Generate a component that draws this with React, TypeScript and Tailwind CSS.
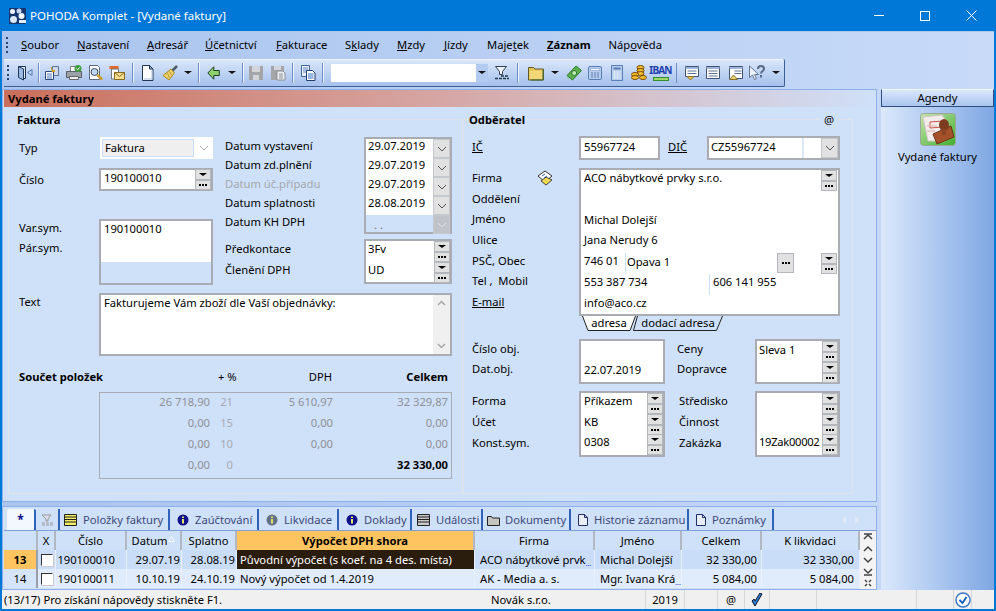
import type { ReactNode } from "react";

const menu = ["Soubor", "Nastavení", "Adresář", "Účetnictví", "Fakturace", "Sklady", "Mzdy", "Jízdy", "Majetek"];
const menuKeys = [0, 0, 0, 0, 0, 1, 0, 0, 4];
const menuWidths = ["w-[56px]", "w-[70px]", "w-[58px]", "w-[71px]", "w-[69px]", "w-[52px]", "w-[47px]", "w-[43px]", "w-[60px]"];

function Grip() {
  return (
    <div className="flex h-[16px] w-[3px] flex-col justify-between">
      {[0, 1, 2, 3].map((i) => (
        <div key={i} className="h-[2px] w-[2px] bg-[#27456f]" />
      ))}
    </div>
  );
}

function Ic({ children, w = 16 }: { children: ReactNode; w?: number }) {
  return (
    <svg width={w} height="16" viewBox={`0 0 ${w} 16`} className="block">
      {children}
    </svg>
  );
}

const icons: Record<string, ReactNode> = {
  door: (
    <Ic>
      <path d="M1.500 1.500h7v12h-2" fill="#dce8f8" stroke="#1d3557" />
      <path d="M1.500 1.500l5 2.500v11l-5-2.500z" fill="#9dbbe2" stroke="#1d3557" />
      <path d="M15 4.500v6L10.500 7.500z" fill="#c7dcf7" stroke="#4d76ad" />
    </Ic>
  ),
  copy: (
    <Ic>
      <path d="M8.500 1.500h6v9h-6z" fill="#cfd9ea" stroke="#5e7497" />
      <path d="M1.500 6.500h8v8h-8z" fill="#fff" stroke="#2d4a78" />
      <path d="M3 9h5M3 11h5M3 13h5" stroke="#4f7ac0" />
      <path d="M7 2l1 3 3 1-3 1" fill="#f0c430" stroke="#c59a15" />
    </Ic>
  ),
  print: (
    <Ic>
      <path d="M4.500 1.500h6v5h-6z" fill="#fff" stroke="#777" />
      <path d="M.5 6.500h15v6H.5z" fill="#9ca0a8" stroke="#5a5d63" />
      <path d="M3.500 11.500h9v3h-9z" fill="#eceef2" stroke="#666" />
      <circle cx="12" cy="3.500" r="3.500" fill="#3f9e3f" />
      <path d="M10.300 3.500l1.300 1.300 2.200-2.500" stroke="#fff" fill="none" />
    </Ic>
  ),
  preview: (
    <Ic>
      <path d="M1.500 .5h8l2 2v12h-10z" fill="#fff" stroke="#5a6a84" />
      <circle cx="6.500" cy="7" r="3.500" fill="#bcd8f3" stroke="#3c4a60" />
      <path d="M9.500 10l4.500 4.500" stroke="#c99c28" strokeWidth="2.500" />
    </Ic>
  ),
  mail: (
    <Ic>
      <path d="M.5 1h9v3h-9z" fill="#e2692e" />
      <path d="M2.500 4h7v10h-7z" fill="#fff" stroke="#777" />
      <path d="M5.500 7.500h10v7h-10z" fill="#f7dd90" stroke="#8a6a20" />
      <path d="M5.500 7.500l5 4 5-4" fill="none" stroke="#8a6a20" />
    </Ic>
  ),
  doc: (
    <Ic w={13}>
      <path d="M1.500 .5h7l3.500 3.500v11.500H1.500z" fill="#fff" stroke="#1f3450" />
      <path d="M8.500 .5v3.500H12z" fill="#9fb8dc" stroke="#1f3450" />
      <path d="M11 5v9H3" fill="none" stroke="#a9c0e2" />
    </Ic>
  ),
  broom: (
    <Ic>
      <path d="M15 1l-5 5" stroke="#4e5a68" strokeWidth="2.500" />
      <path d="M9 4l3.500 4L7 15 1 10.500z" fill="#eed06a" stroke="#a88a2c" />
      <path d="M5 8l3 5M7.500 6.500l2.500 4" stroke="#b99a35" />
    </Ic>
  ),
  back: (
    <Ic w={13}>
      <path d="M.8 8l6-6.200v3.700h5.500v5H6.800v3.700z" fill="#8fd06c" stroke="#1b3f20" />
    </Ic>
  ),
  save: (
    <Ic>
      <path d="M1 1h14v14H1z" fill="#a3a5a9" />
      <path d="M4 1h8v6H4z" fill="#d2d5da" />
      <path d="M5 10h6v5H5z" fill="#d2d5da" />
    </Ic>
  ),
  saveall: (
    <Ic>
      <path d="M1 1h13v14H1z" fill="#a3a5a9" />
      <path d="M4 1h7v4H4z" fill="#d2d5da" />
      <path d="M7 6h6l2 2v7H7z" fill="#eef2f8" stroke="#8a8c90" />
      <path d="M9 9h4M9 11h4M9 13h4" stroke="#8a8c90" />
    </Ic>
  ),
  paste: (
    <Ic>
      <path d="M1.500 .5h8v11h-8z" fill="#e6eefb" stroke="#44679c" />
      <path d="M3 3h5M3 5h5M3 7h5" stroke="#6a8cc0" />
      <path d="M6.500 5.500h6l2.500 2.500v7.500H6.500z" fill="#fff" stroke="#1f3f70" />
      <path d="M8 9h5.500M8 11h5.500M8 13h5.500" stroke="#2f6fc8" />
    </Ic>
  ),
  folder: (
    <Ic>
      <path d="M.5 2.500h5l1.500 1.500h8.500v11H.5z" fill="#e6c050" stroke="#5f5a2a" />
      <path d="M1.500 5.500h13v8.500h-13z" fill="#f2d778" />
      <path d="M15 5v10H3" fill="none" stroke="#3e6a3a" />
    </Ic>
  ),
  money: (
    <Ic>
      <path d="M1 10.500L10 1l5.500 4.500L6.500 15z" fill="#5bb04c" stroke="#2d7a2a" />
      <path d="M1 12.500L3 14" stroke="#8fd07f" />
      <circle cx="8.200" cy="8" r="2.500" fill="#bfe6b0" stroke="#2d7a2a" />
    </Ic>
  ),
  calc: (
    <Ic w={14}>
      <rect x=".5" y="1.500" width="13" height="13" rx="1.500" fill="#b7cdee" stroke="#5a7db3" />
      <path d="M2.500 3.500h9v2h-9z" fill="#edf3fc" stroke="#7a97c4" strokeWidth=".5" />
      <path d="M3 8h8M3 10h8M3 12h8" stroke="#5a7db3" strokeDasharray="2 1" />
    </Ic>
  ),
  calc2: (
    <Ic w={12}>
      <path d="M.5 .5h11v15H.5z" fill="#b7cdee" stroke="#5a7db3" />
      <path d="M2.500 2.500h7v2h-7z" fill="#5a7db3" />
      <path d="M2.500 7h7M2.500 9h7M2.500 11h7M2.500 13h7" stroke="#fff" strokeDasharray="2 1" />
    </Ic>
  ),
  coins: (
    <Ic>
      <ellipse cx="9.500" cy="2.500" rx="3.500" ry="2" fill="#f0bc30" stroke="#7d4d08" />
      <ellipse cx="9.500" cy="5.500" rx="3.500" ry="2" fill="#f0bc30" stroke="#7d4d08" />
      <ellipse cx="9.500" cy="8.500" rx="3.500" ry="2" fill="#f0bc30" stroke="#7d4d08" />
      <ellipse cx="4" cy="9.500" rx="3.500" ry="2" fill="#f0bc30" stroke="#7d4d08" />
      <ellipse cx="4" cy="12.500" rx="3.500" ry="2" fill="#f0bc30" stroke="#7d4d08" />
      <ellipse cx="12" cy="12.500" rx="3.500" ry="2" fill="#f0bc30" stroke="#7d4d08" />
    </Ic>
  ),
  note1: (
    <Ic>
      <path d="M1.500 1.500h13v10h-13z" fill="#fff" stroke="#3f5273" />
      <path d="M1.500 3h13" stroke="#9db6dc" strokeWidth="2" />
      <path d="M3.500 6h9M3.500 8.500h9" stroke="#5d7298" />
      <path d="M3 11.500h7L6.500 15z" fill="#e9c64a" stroke="#8a7130" />
    </Ic>
  ),
  note2: (
    <Ic w={15}>
      <path d="M.5 1.500h13v12H.5z" fill="#fff" stroke="#3f5273" />
      <path d="M.5 3h13" stroke="#9db6dc" strokeWidth="2" />
      <path d="M2.500 6h9M2.500 8.500h9M2.500 11h9" stroke="#5d7298" />
    </Ic>
  ),
  note3: (
    <Ic>
      <path d="M1.500 1.500h13v12h-13z" fill="#fff" stroke="#3f5273" />
      <path d="M1.500 3h13" stroke="#9db6dc" strokeWidth="2" />
      <path d="M6.500 6h7M6.500 8.500h7" stroke="#5d7298" />
      <path d="M1.500 14.500h8L5.500 10z" fill="#e9d570" stroke="#8a7130" />
    </Ic>
  ),
  help: (
    <Ic>
      <path d="M.5 1v11.500l3-2.500 2 4.500 2-1-2-4h4z" fill="#eef3fb" stroke="#64748e" />
      <path d="M9 4c0-4 6-4 6 0 0 2-3 2-3 4.500M12 10v2.500" stroke="#586a88" strokeWidth="2" fill="none" />
    </Ic>
  ),
};

function Tool({ name }: { name: string }) {
  return <div className="flex w-[22px] justify-center">{icons[name]}</div>;
}

function Caret() {
  return (
    <div className="flex w-[16px] justify-center">
      <div className="h-0 w-0 border-x-[4px] border-t-[3px] border-x-transparent border-t-[#111]" />
    </div>
  );
}

function Sep({ className = "" }: { className?: string }) {
  return <div className={`h-[20px] w-[2px] border-l border-[#6f8fc4] bg-white/70 ${className}`} />;
}

function Toolbar() {
  return (
    <div className="flex h-[28px] w-[781px] items-center rounded-r-[2px] border-b border-r border-[#3d5f96] bg-gradient-to-b from-[#dce8fb] to-[#a5c0ec] pl-[3px] shadow-[inset_0_1px_0_#eef4fe]">
      <Grip />
      <div className="w-[4px]" />
      <Tool name="door" />
      <Sep className="mx-[2px]" />
      <Tool name="copy" />
      <Tool name="print" />
      <Tool name="preview" />
      <Tool name="mail" />
      <Sep className="ml-[4px] mr-[3px]" />
      <Tool name="doc" />
      <Tool name="broom" />
      <Caret />
      <Sep className="mx-[2px]" />
      <Tool name="back" />
      <Caret />
      <Sep className="mx-[2px]" />
      <Tool name="save" />
      <Tool name="saveall" />
      <Sep className="mx-[3px]" />
      <Tool name="paste" />
      <Sep className="mx-[3px]" />
      <div className="ml-[4px] flex h-[18px] w-[160px] justify-end bg-white">
        <div className="flex w-[12px] items-center justify-center bg-[#b3cbf0]">
          <div className="h-0 w-0 border-x-[4px] border-t-[3px] border-x-transparent border-t-[#111]" />
        </div>
      </div>
      <div className="flex w-[29px] justify-center">
        <Ic>
          <path d="M1.500 1.500h11L8.500 6.500v3h-3v-3z" fill="#f2f6fc" stroke="#2c3e50" />
          <path d="M7 11h8M1 13.500h14" stroke="#1f3a4a" strokeDasharray="3 1" strokeWidth="1.500" />
        </Ic>
      </div>
      <Sep />
      <div className="w-[7px]" />
      <Tool name="folder" />
      <Caret />
      <Tool name="money" />
      <Tool name="calc" />
      <Tool name="calc2" />
      <Tool name="coins" />
      <div className="flex h-[16px] w-[22px] flex-col items-center text-[10px] font-bold leading-[11px] tracking-[-0.8px] text-[#1d3fae]">
        IBAN
        <div className="mt-[1px] h-[4px] w-[16px] border border-[#2f8c2f] bg-[#9fd86b]" />
      </div>
      <Sep className="mx-[4px]" />
      <Tool name="note1" />
      <Tool name="note2" />
      <Tool name="note3" />
      <Tool name="help" />
      <Caret />
    </div>
  );
}

function Drop({ h = "h-[11px]" }: { h?: string }) {
  return (
    <div className={`flex ${h} w-[16px] items-center justify-center border border-[#b4b7bb] bg-[#e1e1e1]`}>
      <div className="h-0 w-0 border-x-[4px] border-t-[3px] border-x-transparent border-t-black" />
    </div>
  );
}

function Dots({ h = "h-[10px]" }: { h?: string }) {
  return (
    <div className={`flex ${h} w-[16px] items-center justify-center gap-[1px] border border-[#b4b7bb] bg-[#e1e1e1]`}>
      <div className="h-[2px] w-[2px] bg-black" />
      <div className="h-[2px] w-[2px] bg-black" />
      <div className="h-[2px] w-[2px] bg-black" />
    </div>
  );
}

function Pick() {
  return (
    <div className="ml-auto flex shrink-0 flex-col">
      <Drop />
      <Dots />
    </div>
  );
}

function Chevron({ disabled = false }: { disabled?: boolean }) {
  return (
    <div className={`flex h-[19px] w-[17px] items-center justify-center border border-[#c5c8cc] ${disabled ? "bg-[#c0c4ca]" : "bg-[#e1e1e1]"}`}>
      <svg width="10" height="6" viewBox="0 0 10 6">
        <path d="M1 1l4 4 4-4" fill="none" stroke={disabled ? "#dfe2e6" : "#555"} />
      </svg>
    </div>
  );
}

const box = "border-2 border-[#a9adb3]";

function Row({ label, dim = false, className = "h-[19px]" }: { label: ReactNode; dim?: boolean; className?: string }) {
  return <div className={`flex items-center ${className} ${dim ? "text-[#a5a8ad]" : ""}`}>{label}</div>;
}

function Fakturace() {
  const dates = [
    ["Datum vystavení", "29.07.2019"],
    ["Datum zd.plnění", "29.07.2019"],
    ["Datum úč.případu", "29.07.2019"],
    ["Datum splatnosti", "28.08.2019"],
  ];
  const totals = [
    ["26 718,90", "21", "5 610,97", "32 329,87"],
    ["0,00", "15", "0,00", "0,00"],
    ["0,00", "10", "0,00", "0,00"],
    ["0,00", "0", "", ""],
  ];
  return (
    <div className="ml-[4px] h-[375px] w-[454px] border border-[#dfe4ea] pl-[10px] pr-[8px]">
      <div className="-ml-[2px] -mt-[8px] h-[16px] w-fit bg-[#cfe0f9] pr-[4px] font-bold leading-[16px]">Faktura</div>
      <div className="mt-[9px] flex">
        <div className="w-[194px]">
          <div className="flex h-[22px] items-center">
            <div className="w-[81px]">Typ</div>
            <div className="flex h-[22px] w-[113px] items-center border-2 border-white bg-white">
              <div className="flex h-full w-[92px] items-center border border-[#cddcf5] bg-[#efefef] pl-[2px]">Faktura</div>
              <svg width="10" height="6" viewBox="0 0 10 6" className="ml-[5px]">
                <path d="M1 1l4 4 4-4" fill="none" stroke="#aaa" />
              </svg>
            </div>
          </div>
          <div className="mt-[9px] flex h-[23px] items-center">
            <div className="w-[80px]">Číslo</div>
            <div className={`flex h-[23px] w-[114px] items-center justify-between bg-white pl-[3px] ${box}`}>
              <span className="pb-[3px]">190100010</span>
              <Pick />
            </div>
          </div>
          <div className="mt-[28px] flex h-[66px]">
            <div className="-mt-[1px] w-[80px]">
              <Row label="Var.sym." className="h-[20px]" />
              <Row label="Pár.sym." className="h-[20px]" />
            </div>
            <div className={`w-[114px] ${box}`}>
              <div className="h-[41px] bg-white pl-[3px] leading-[16px]">190100010</div>
            </div>
          </div>
        </div>
        <div className="ml-[12px] w-[227px]">
          <div className="flex h-[97px]">
            <div className="-mt-[1px] w-[139px]">
              {dates.map(([l], i) => (
                <Row key={l} label={l} dim={i === 2} />
              ))}
              <Row label="Datum KH DPH" />
            </div>
            <div className={`flex-1 ${box}`}>
              {dates.map(([l, d]) => (
                <div key={l} className="flex">
                  <div className="flex h-[19px] flex-1 items-center bg-white pb-[5px] pl-[2px]">{d}</div>
                  <Chevron />
                </div>
              ))}
              <div className="flex">
                <div className="flex h-[19px] flex-1 items-center pl-[8px] text-[#777]">. .</div>
                <Chevron disabled />
              </div>
            </div>
          </div>
          <div className="mt-[5px] flex h-[45px]">
            <div className="-mt-[1px] w-[139px]">
              <Row label="Předkontace" className="h-[21px]" />
              <Row label="Členění DPH" className="h-[21px]" />
            </div>
            <div className={`flex-1 bg-white ${box}`}>
              {["3Fv", "UD"].map((v) => (
                <div key={v} className="flex h-[20.500px] items-start pl-[2px]">
                  <span className="pt-[2px]">{v}</span>
                  <Pick />
                </div>
              ))}
            </div>
          </div>
        </div>
      </div>
      <div className="mt-[8px] flex h-[63px]">
        <div className="w-[80px] pt-[3px]">Text</div>
        <div className={`flex w-[353px] justify-between bg-white ${box}`}>
          <div className="pl-[3px] leading-[16px]">Fakturujeme Vám zboží dle Vaší objednávky:</div>
          <div className="flex w-[17px] flex-col items-center justify-between bg-[#f0f0f0] py-[5px]">
            <svg width="9" height="6" viewBox="0 0 9 6">
              <path d="M1 5l3.500-3.500L8 5" fill="none" stroke="#a8a8a8" strokeWidth="1.500" />
            </svg>
            <svg width="9" height="6" viewBox="0 0 9 6">
              <path d="M1 1l3.500 3.500L8 1" fill="none" stroke="#a8a8a8" strokeWidth="1.500" />
            </svg>
          </div>
        </div>
      </div>
      <div className="mt-[13px] flex h-[16px] items-center">
        <div className="w-[199px] font-bold">Součet položek</div>
        <div className="w-[18px] whitespace-nowrap text-right">+ %</div>
        <div className="w-[96px] text-right">DPH</div>
        <div className="w-[116px] text-right font-bold">Celkem</div>
      </div>
      <div className="ml-[80px] mt-[7px] h-[87px] w-[353px] border border-[#a9adb3] text-[#8e9196]">
        {totals.map(([a, p, d, c]) => (
          <div key={p} className="flex h-[21px] items-center pb-[4px]">
            <div className="w-[110px] text-right">{a}</div>
            <div className="w-[23px] text-right text-[#a6abb2]">{p}</div>
            <div className="w-[100px] text-right">{d}</div>
            <div className={`w-[115px] text-right ${p === "0" ? "font-bold text-black" : ""}`}>{p === "0" ? "32 330,00" : c}</div>
          </div>
        ))}
      </div>
    </div>
  );
}

function Tabs() {
  return (
    <div className="flex h-[15px]">
      <div className="relative flex w-[54px] items-center justify-center">
        <svg className="absolute inset-0" width="54" height="15" viewBox="0 0 54 15">
          <path d="M.5 0l5.500 14.500h42L53.500 0" fill="#fff" stroke="#222" />
        </svg>
        <span className="relative pb-[2px]">adresa</span>
      </div>
      <div className="relative -ml-[3px] flex w-[90px] items-center justify-center">
        <svg className="absolute inset-0" width="90" height="15" viewBox="0 0 90 15">
          <path d="M4.500 0L.5 14.500h83L89.500 0" fill="none" stroke="#222" />
        </svg>
        <span className="relative pb-[2px]">dodací adresa</span>
      </div>
    </div>
  );
}

function Odberatel() {
  const addr = ["ACO nábytkové prvky s.r.o.", "", "Michal Dolejší", "Jana Nerudy 6"];
  return (
    <div className="ml-[1px] h-[375px] w-[390px] border border-[#dfe4ea] pl-[8px]">
      <div className="-ml-[3px] -mt-[8px] flex h-[16px] justify-between pr-[14px] leading-[16px]">
        <div className="bg-[#cfe0f9] pr-[2px] font-bold">Odběratel</div>
        <div className="bg-[#cfe0f9] px-[4px]">@</div>
      </div>
      <div className="mt-[8px] flex h-[24px] items-center">
        <div className="w-[107px] pb-[3px] underline">IČ</div>
        <div className={`flex h-[24px] w-[81px] items-center bg-white pb-[3px] pl-[3px] ${box}`}>55967724</div>
        <div className="ml-[8px] w-[39px] pb-[3px] underline">DIČ</div>
        <div className={`flex h-[24px] w-[133px] items-center bg-white ${box}`}>
          <div className="flex h-full w-[95px] items-center border-r-2 border-[#dbe7fb] pb-[3px] pl-[2px]">CZ55967724</div>
          <div className="flex-1" />
          <div className="flex h-full w-[17px] items-center justify-center border border-[#c5c8cc] bg-[#e1e1e1]">
            <svg width="10" height="6" viewBox="0 0 10 6">
              <path d="M1 1l4 4 4-4" fill="none" stroke="#555" />
            </svg>
          </div>
        </div>
      </div>
      <div className="mt-[8px] flex h-[148px]">
        <div className="-mt-[1px] w-[107px]">
          <div className="flex h-[21px] items-center gap-[35px]">
            Firma
            <svg width="16" height="16" viewBox="0 0 16 16">
              <path d="M1 6l7-5 7 5-7 6z" fill="#fff" stroke="#333" />
              <path d="M5 6l3-2M7 8l3-2" stroke="#2f5fc8" />
              <path d="M4 11l5-4 6 3-6 5z" fill="#ecd94e" stroke="#444" />
            </svg>
          </div>
          {["Oddělení", "Jméno", "Ulice", "PSČ, Obec", "Tel ,  Mobil"].map((l) => (
            <div key={l} className="flex h-[20.700px] items-center whitespace-pre">{l}</div>
          ))}
          <div className="flex h-[20.700px] items-center underline">E-mail</div>
        </div>
        <div className="w-[261px] border-2 border-[#a9adb3] bg-white">
          {addr.map((a, i) => (
            <div key={i} className="flex h-[20.800px] items-start pl-[3px] pr-[1px]">
              <span className="pt-[2px]">{a}</span>
              {i === 0 && <Pick />}
            </div>
          ))}
          <div className="flex h-[20.800px] items-start pr-[1px]">
            <div className="w-[44px] pl-[3px] pt-[2px]">746 01</div>
            <div className="h-full w-[152px] border-l border-[#cfe0f9] pl-[1px] pt-[3px]">Opava 1</div>
            <div className="flex h-[20px] w-[17px] items-center justify-center gap-[1px] border border-[#b4b7bb] bg-[#e1e1e1]">
              <div className="h-[2px] w-[2px] bg-black" />
              <div className="h-[2px] w-[2px] bg-black" />
              <div className="h-[2px] w-[2px] bg-black" />
            </div>
            <Pick />
          </div>
          <div className="flex h-[20.800px] items-start">
            <div className="w-[128px] pl-[3px] pt-[2px]">553 387 734</div>
            <div className="h-full border-l border-[#cfe0f9] pl-[3px] pt-[2px]">606 141 955</div>
          </div>
          <div className="h-[20.800px] pl-[3px] pt-[2px]">info@aco.cz</div>
        </div>
      </div>
      <div className="ml-[110px]">
        <Tabs />
      </div>
      <div className="mt-[8px] flex h-[45px]">
        <div className="-mt-[1px] w-[107px]">
          <Row label="Číslo obj." className="h-[21px]" />
          <Row label="Dat.obj." className="h-[20px]" />
        </div>
        <div className={`w-[86px] bg-white pl-[3px] ${box}`}>
          <div className="h-[19px]" />
          <Row label="22.07.2019" className="h-[20px]" />
        </div>
        <div className="-mt-[1px] ml-[12px] w-[78px]">
          <Row label="Ceny" className="h-[21px]" />
          <Row label="Dopravce" className="h-[20px]" />
        </div>
        <div className={`flex w-[85px] justify-between bg-white pl-[2px] ${box}`}>
          <div className="pt-[1px] leading-[16px]">Sleva 1</div>
          <div className="flex flex-col">
            <Pick />
            <Pick />
          </div>
        </div>
      </div>
      <div className="mt-[7px] flex h-[66px]">
        <div className="-mt-[1px] w-[107px]">
          <Row label="Forma" className="h-[21px]" />
          <Row label="Účet" className="h-[21px]" />
          <Row label="Konst.sym." className="h-[21px]" />
        </div>
        <div className={`w-[86px] bg-white ${box}`}>
          {["Příkazem", "KB", "0308"].map((v) => (
            <div key={v} className="flex h-[20.600px] items-start pl-[3px]">
              <span className="pt-[2px]">{v}</span>
              <Pick />
            </div>
          ))}
        </div>
        <div className="-mt-[1px] ml-[14px] w-[76px]">
          <Row label="Středisko" className="h-[21px]" />
          <Row label="Činnost" className="h-[21px]" />
          <Row label="Zakázka" className="h-[21px]" />
        </div>
        <div className={`w-[85px] bg-white ${box}`}>
          {["", "", "19Zak00002"].map((v, i) => (
            <div key={i} className="flex h-[20.600px] items-start pl-[2px]">
              <span className="whitespace-nowrap pt-[2px] tracking-[-0.3px]">{v}</span>
              <Pick />
            </div>
          ))}
        </div>
      </div>
    </div>
  );
}

function BlueI({ color = "#10108a" }: { color?: string }) {
  return (
    <svg width="12" height="12" viewBox="0 0 12 12">
      <circle cx="6" cy="6" r="5.500" fill={color} />
      <path d="M5 5h2v4.500H5zM5 2.500h2v1.500H5z" fill="#e9e26a" />
    </svg>
  );
}

function Sheet({ fill = "#f0f0a0" }: { fill?: string }) {
  return (
    <svg width="13" height="12" viewBox="0 0 13 12" className="-ml-[2px]">
      <path d="M.5.5h12v11H.5z" fill={fill} stroke="#222" />
      <path d="M1 3h11M1 5.500h11M1 8h11" stroke="#222" />
    </svg>
  );
}

function DocIc() {
  return (
    <svg width="10" height="12" viewBox="0 0 10 12">
      <path d="M.5.500h6l3 3v8h-9z" fill="#e8ecf5" stroke="#222f66" />
      <path d="M6.500.5v3h3" fill="none" stroke="#222f66" />
    </svg>
  );
}

const tabs: { w: string; label: string; icon: ReactNode }[] = [
  { w: "w-[109px]", label: "Položky faktury", icon: <Sheet fill="#f2ec66" /> },
  { w: "w-[87px]", label: "Zaúčtování", icon: <BlueI /> },
  { w: "w-[78px]", label: "Likvidace", icon: <BlueI color="#667087" /> },
  { w: "w-[71px]", label: "Doklady", icon: <BlueI /> },
  { w: "w-[69px]", label: "Události", icon: <Sheet fill="#c9c9c9" /> },
  {
    w: "w-[86px]",
    label: "Dokumenty",
    icon: (
      <svg width="13" height="12" viewBox="0 0 13 12" className="-ml-[3px] -mr-[1px]">
        <path d="M.5 2.500h4l1 1.500h7v7.500H.5z" fill="#c6c4be" stroke="#222" />
      </svg>
    ),
  },
  { w: "w-[116px]", label: "Historie záznamu", icon: <DocIc /> },
  { w: "w-[83px]", label: "Poznámky", icon: <DocIc /> },
];

const cols = ["w-[34px]", "w-[18px]", "w-[71px]", "w-[55px]", "w-[55px]", "w-[238px]", "w-[120px]", "w-[87px]", "w-[80px]", "w-[98px]"];

function Cell({ w, children, className = "" }: { w: string; children?: ReactNode; className?: string }) {
  return <div className={`flex h-full shrink-0 items-center overflow-hidden whitespace-nowrap border-r border-[#eaf1fc] ${w} ${className}`}>{children}</div>;
}

function Check() {
  return <div className="h-[12px] w-[12px] border border-[#333] border-b-white border-r-white bg-white shadow-[1px_1px_0_#ccc]" />;
}

function Agenda() {
  const rows = [
    { n: "13", bg: "bg-[#c9dcf8]", head: "bg-[#fdc45f] font-bold", c: "190100010", d: "29.07.19", s: "28.08.19", v: "Původní výpočet (s koef. na 4 des. místa)", f: "ACO nábytkové prvk", j: "Michal Dolejší", a: "32 330,00" },
    { n: "14", bg: "bg-[#e0ebfc]", head: "bg-[#d6e4fa]", c: "190100011", d: "10.10.19", s: "24.10.19", v: "Nový výpočet od 1.4.2019", f: "AK - Media a. s.", j: "Mgr. Ivana Krá", a: "5 084,00" },
  ];
  return (
    <div className="mt-[4px] flex h-[84px] flex-col border border-[#8eb0e8] bg-[#cfe0f9] pl-[1px]">
      <div className="flex h-[23px] pl-[3px] pt-[2px]">
        <div className="mr-[1px] flex w-[29px] items-center justify-center rounded-t-[2px] border-r-2 border-[#2f62b8] bg-[#f3f7fe] text-[12px] font-bold text-[#10108a]">*</div>
        <div className="mr-[1px] flex w-[23px] items-center justify-center border-r-2 border-[#2f62b8]">
          <svg width="13" height="12" viewBox="0 0 13 12">
            <path d="M1 1h9L7 5v2H5V5z" fill="#dde" stroke="#999" />
            <path d="M1 9h11M1 11h11" stroke="#999" strokeDasharray="3 1" />
          </svg>
        </div>
        {tabs.map((t) => (
          <div key={t.label} className={`mr-[2px] flex shrink-0 items-center gap-[6px] overflow-hidden whitespace-nowrap border-r-2 border-[#2f62b8] pl-[5px] text-[#3e4a78] ${t.w}`}>
            {t.icon}
            {t.label}
          </div>
        ))}
        <div className="ml-[66px] flex items-center gap-[9px]">
          <div className="h-0 w-0 border-y-[4px] border-r-[4px] border-y-transparent border-r-[#dfe8f7]" />
          <div className="h-0 w-0 border-y-[4px] border-l-[4px] border-y-transparent border-l-[#dfe8f7]" />
        </div>
      </div>
      <div className="flex min-h-0 flex-1">
        <div className="flex w-[856px] flex-col">
          <div className="flex h-[20px] items-center border-t border-[#7f9fd8] bg-[#cfe0f9] text-center">
            {["", "X", "Číslo", "Datum", "Splatno", "Výpočet DPH shora", "Firma", "Jméno", "Celkem", "K likvidaci"].map((h, i) => (
              <Cell key={i} w={cols[i]} className={`justify-center border-r-2 border-r-[#b2b8c2] ${i === 5 ? "bg-[#fdc45f] font-bold" : ""}`}>
                {h}
                {i === 3 && (
                  <svg width="7" height="6" viewBox="0 0 7 6" className="mb-[3px] ml-[1px]">
                    <path d="M.5 5.500h6L3.500 .5z" fill="none" stroke="#f4f8ff" />
                  </svg>
                )}
              </Cell>
            ))}
          </div>
          {rows.map((r) => (
            <div key={r.n} className={`flex h-[19px] items-center ${r.bg}`}>
              <Cell w={cols[0]} className={`justify-center border-r-2 border-r-[#9aa0a9] ${r.head}`}>{r.n}</Cell>
              <Cell w={cols[1]} className="justify-center">
                <Check />
              </Cell>
              <Cell w={cols[2]} className="justify-end pr-[11px]">{r.c}</Cell>
              <Cell w={cols[3]} className="justify-end pr-[1px]">{r.d}</Cell>
              <Cell w={cols[4]} className="justify-end pr-[1px]">{r.s}</Cell>
              <Cell w={cols[5]} className={`pl-[3px] ${r.n === "13" ? "bg-[#2b1d0e] text-white" : ""}`}>{r.v}</Cell>
              <Cell w={cols[6]} className="pl-[5px]">
                {r.f}
                {r.n === "13" && <span className="self-end pb-[2px] text-[7px] leading-none text-[#2536c9]">...</span>}
              </Cell>
              <Cell w={cols[7]} className="pl-[5px]">
                {r.j}
                {r.n === "14" && <span className="self-end pb-[2px] text-[7px] leading-none text-[#2536c9]">...</span>}
              </Cell>
              <Cell w={cols[8]} className="justify-end pr-[4px]">{r.a}</Cell>
              <Cell w={cols[9]} className="justify-end pr-[5px]">{r.a}</Cell>
            </div>
          ))}
        </div>
        <div className="flex w-[17px] flex-col items-center justify-between border-t border-[#7f9fd8] bg-[#f3f3f3] py-[2px]">
          {["M1 1h8M1 6l4-4 4 4", "M1 6l4-4 4 4", "M1 2l4 4 4-4", "M1 1l4 4 4-4M1 7h8", "M2 1l2 2M8 1L6 3M2 7l2-2M8 7L6 5"].map((d) => (
            <svg key={d} width="10" height="8" viewBox="0 0 10 8">
              <path d={d} fill="none" stroke="#444" strokeWidth="1.500" />
            </svg>
          ))}
        </div>
      </div>
    </div>
  );
}

function StatusBar() {
  const cell = "flex h-full items-center border-r border-[#d6d6d6]";
  return (
    <div className="flex h-[19px] items-center bg-[#f0f0f0] pl-[2px]">
      <div className={`w-[642px] ${cell}`}>
        <div className="w-[487px]">(13/17) Pro získání nápovědy stiskněte F1.</div>
        Novák s.r.o.
      </div>
      <div className={`w-[39px] justify-center ${cell}`}>2019</div>
      <div className="h-full w-[33px] border-r border-[#d6d6d6]" />
      <div className={`w-[27px] justify-center ${cell}`}>@</div>
      <div className={`w-[25px] justify-center ${cell}`}>
        <svg width="12" height="14" viewBox="0 0 12 14">
          <path d="M1 8l3 5 7-12-2-1-5 8-1-2z" fill="#2d7fd8" stroke="#112" />
        </svg>
      </div>
      <div className={`w-[47px] ${cell}`} />
      <div className={`w-[100px] ${cell}`} />
      <div className={`w-[37px] ${cell}`} />
      <div className={`w-[18px] justify-center ${cell}`}>
        <svg width="16" height="16" viewBox="0 0 16 16">
          <circle cx="8" cy="8" r="7" fill="#fff" stroke="#3f77c4" strokeWidth="1.500" />
          <path d="M4.500 8l3 3 4-6" fill="none" stroke="#1d64c0" strokeWidth="2" />
        </svg>
      </div>
      <div className="flex-1" />
    </div>
  );
}

export default function App() {
  return (
    <div
      className="flex h-[611px] w-[996px] flex-col overflow-hidden bg-[#0078d7] text-[11.200px] leading-none text-black"
      style={{ fontFamily: '"Noto Sans", "Liberation Sans", sans-serif' }}
    >
      <div className="flex h-[31px] shrink-0 items-center pl-[9px] text-[11.500px] text-white">
        <svg width="17" height="16" viewBox="0 0 17 16">
          <rect width="17" height="16" rx="1" fill="#14366e" />
          <circle cx="3.500" cy="3.500" r="2.500" fill="#f2f6ff" />
          <circle cx="10" cy="3" r="2.500" fill="#c9d8f2" />
          <circle cx="12.500" cy="8" r="3" fill="#f2f6ff" />
          <circle cx="4.500" cy="11.500" r="3.500" fill="#dbe8ff" />
          <path d="M10 12h7v3h-7z" fill="#e4edff" />
        </svg>
        <span className="ml-[4px]">POHODA Komplet - [Vydané faktury]</span>
        <div className="ml-auto flex items-center">
          <div className="mr-[36px] h-[1px] w-[10px] bg-white" />
          <div className="mr-[36px] h-[10px] w-[10px] border border-white" />
          <svg width="11" height="11" viewBox="0 0 11 11" className="mr-[19px]">
            <path d="M.5.5l10 10M10.500.5l-10 10" stroke="#fff" />
          </svg>
        </div>
      </div>
      <div className="mx-[2px] flex min-h-0 flex-1 flex-col border-t border-[#a8c8f0] bg-gradient-to-r from-[#a9c4ee] to-[#c8daf8]">
        <div className="flex h-[26px] shrink-0 items-center pl-[4px]">
          <Grip />
          <div className="ml-[12px] flex items-center">
            {menu.map((m, i) => (
              <div key={m} className={`${menuWidths[i]} whitespace-nowrap`}>
                {m.slice(0, menuKeys[i])}
                <span className="underline">{m[menuKeys[i]]}</span>
                {m.slice(menuKeys[i] + 1)}
              </div>
            ))}
            <div className="font-bold">
              <span className="underline">Z</span>áznam
            </div>
            <div className="ml-[18px]">
              Náp<span className="underline">o</span>věda
            </div>
          </div>
        </div>
        <div className="ml-[2px] mt-[1px] h-[28px] shrink-0">
          <Toolbar />
        </div>
        <div className="mt-[1px] flex min-h-0 flex-1 pt-[1px]">
          <div className="flex w-[875px] shrink-0 flex-col">
            <div className="h-[413px] border border-[#8eb0e8] bg-[#cfe0f9] pl-[1px]">
              <div className="flex h-[17px] items-center bg-gradient-to-r from-[#c96f5b] via-[#d6a6a4] to-[#cfe0f9] pl-[4px] font-bold">
                Vydané faktury
              </div>
              <div className="mt-[12px] flex">
                <Fakturace />
                <Odberatel />
              </div>
            </div>
            <Agenda />
          </div>
          <div className="ml-[4px] w-[113px] bg-gradient-to-r from-[#dbe8fc] to-[#7fa7e3]">
            <div className="flex h-[18px] items-center justify-center border border-[#2f4f80] border-t-[#f0f5fe] bg-gradient-to-b from-[#dbe7fb] to-[#a9c4ee]">
              Agendy
            </div>
            <div className="mt-[6px] flex flex-col items-center">
              <svg width="36" height="33" viewBox="0 0 36 33">
                <defs>
                  <linearGradient id="ag" x1="0" y1="0" x2="1" y2="1">
                    <stop offset="0" stopColor="#c9e5b0" />
                    <stop offset="1" stopColor="#3fae2e" />
                  </linearGradient>
                </defs>
                <rect x=".5" y=".5" width="35" height="32" rx="3" fill="url(#ag)" stroke="#9aa89a" />
                <path d="M3 4l19-2 6 9-3 17H8z" fill="#f4ecea" stroke="#d0c8c6" />
                <path d="M10 9l13-1v6l-13 1z" fill="none" stroke="#c8544a" />
                <path d="M7 13h10M7 18h8" stroke="#d9b5ae" />
                <path d="M13 21l18-8 3 11-17 7z" fill="#a5522a" stroke="#6d3216" />
                <ellipse cx="24" cy="12" rx="5" ry="6" fill="#7d3c20" />
                <path d="M22 16h4v6h-4z" fill="#8a4524" />
              </svg>
              <div className="mt-[5px]">Vydané faktury</div>
            </div>
          </div>
        </div>
        <div className="shrink-0">
          <StatusBar />
        </div>
      </div>
      <div className="h-[2px] shrink-0" />
    </div>
  );
}
